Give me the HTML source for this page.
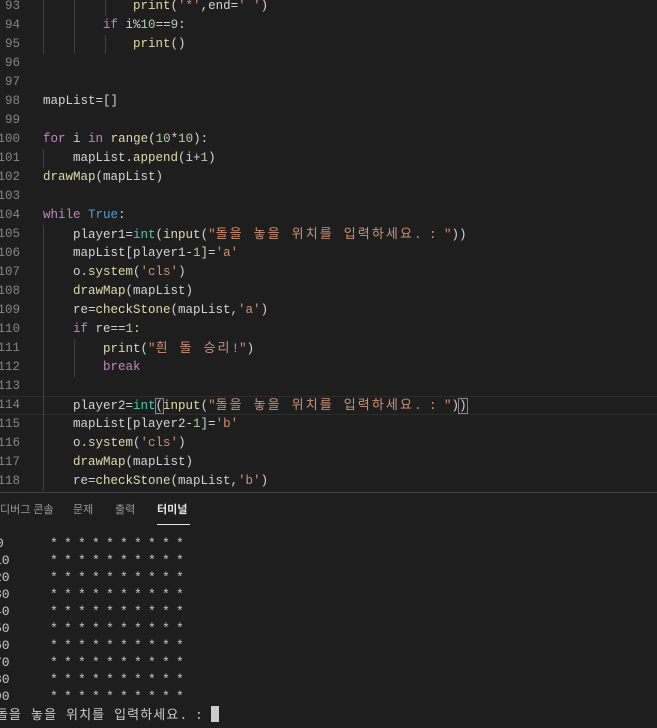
<!DOCTYPE html>
<html><head><meta charset="utf-8"><style>
body{margin:0;width:657px;height:728px;background:#1e1e1e;overflow:hidden;position:relative;font-family:"Liberation Mono","Noto Sans CJK KR",monospace;}
.ln{position:absolute;left:-31px;width:51px;text-align:right;color:#858585;font-size:12.5px;line-height:19px;}
.c{position:absolute;left:43px;color:#d4d4d4;font-size:12.5px;line-height:19px;white-space:pre;}
.k{color:#c586c0}.b{color:#4ec9b0}.f{color:#dcdcaa}.s{color:#ce9178}.n{color:#b5cea8}.t{color:#569cd6}
.kr{font-size:13px;letter-spacing:2.1px}
.g{position:absolute;width:1px;background:#404040}
.t2{position:absolute;color:#cccccc;font-size:13px;line-height:17px;white-space:pre;}
</style></head><body>
<div style="position:absolute;left:0;top:396px;width:657px;height:17px;border-top:1px solid #2c2c2c;border-bottom:1px solid #2c2c2c"></div>
<div class="g" style="left:43px;top:0;height:54px"></div>
<div class="g" style="left:74px;top:0;height:54px"></div>
<div class="g" style="left:105px;top:0;height:16px"></div>
<div class="g" style="left:105px;top:35px;height:19px"></div>
<div class="g" style="left:43px;top:149px;height:19px"></div>
<div class="g" style="left:43px;top:225px;height:266px"></div>
<div class="g" style="left:74px;top:339px;height:38px"></div>
<div id="code"></div>
<div style="position:absolute;left:0;top:492px;width:657px;height:1px;background:#444"></div>
<div style="position:absolute;top:502px;left:0;font-family:'Liberation Sans','Noto Sans CJK KR',sans-serif;font-size:11px;color:#999;line-height:16px">
<span style="position:absolute;left:0;white-space:nowrap">디버그 콘솔</span>
<span style="position:absolute;left:73px;white-space:nowrap">문제</span>
<span style="position:absolute;left:115px;white-space:nowrap">출력</span>
<span style="position:absolute;left:157px;white-space:nowrap;color:#e7e7e7;font-weight:bold">터미널</span>
</div>
<div style="position:absolute;left:157px;top:524px;width:33px;height:1px;background:#e7e7e7"></div>
<div id="term"></div>
<script>
const K='<span class="kr">돌을 놓을 위치를 입력하세요</span>';
const L=[
[93,'            <span class="f">print</span>(<span class="s">\'*\'</span>,end=<span class="s">\' \'</span>)'],
[94,'        <span class="k">if</span> i%<span class="n">10</span>==<span class="n">9</span>:'],
[95,'            <span class="f">print</span>()'],
[96,''],[97,''],
[98,'mapList=[]'],[99,''],
[100,'<span class="k">for</span> i <span class="k">in</span> <span class="f">range</span>(<span class="n">10</span>*<span class="n">10</span>):'],
[101,'    mapList.<span class="f">append</span>(i+<span class="n">1</span>)'],
[102,'<span class="f">drawMap</span>(mapList)'],[103,''],
[104,'<span class="k">while</span> <span class="t">True</span>:'],
[105,'    player1=<span class="b">int</span>(<span class="f">input</span>(<span class="s">"'+K+'. : "</span>))'],
[106,'    mapList[player1-<span class="n">1</span>]=<span class="s">\'a\'</span>'],
[107,'    o.<span class="f">system</span>(<span class="s">\'cls\'</span>)'],
[108,'    <span class="f">drawMap</span>(mapList)'],
[109,'    re=<span class="f">checkStone</span>(mapList,<span class="s">\'a\'</span>)'],
[110,'    <span class="k">if</span> re==<span class="n">1</span>:'],
[111,'        <span class="f">print</span>(<span class="s">"<span class="kr">흰 돌 승리</span>!"</span>)'],
[112,'        <span class="k">break</span>'],[113,''],
[114,'    player2=<span class="b">int</span><span style="outline:1px solid #888">(</span><span class="f">input</span>(<span class="s">"'+K+'. : "</span>)<span style="outline:1px solid #888">)</span>'],
[115,'    mapList[player2-<span class="n">1</span>]=<span class="s">\'b\'</span>'],
[116,'    o.<span class="f">system</span>(<span class="s">\'cls\'</span>)'],
[117,'    <span class="f">drawMap</span>(mapList)'],
[118,'    re=<span class="f">checkStone</span>(mapList,<span class="s">\'b\'</span>)']];
let h='';L.forEach((l,i)=>{const y=-3+i*19;h+=`<div class="ln" style="top:${y}px">${l[0]}</div><div class="c" style="top:${y}px">${l[1]}</div>`;});
document.getElementById('code').innerHTML=h;
let t='';const nums=['0','10','20','30','40','50','60','70','80','90'];
nums.forEach((n,i)=>{const y=535+i*17;t+=`<div class="t2" style="left:${n.length==1?-4:-6}px;top:${y}px">${n}</div><div class="t2" style="left:50px;top:${y}px;letter-spacing:6.2px">**********</div>`;});
t+=`<div class="t2" style="left:-4px;top:706px"><span style="font-size:13px;letter-spacing:1.1px">돌을 놓을 위치를 입력하세요</span>. : <span style="display:inline-block;width:8px;height:16px;background:#ccc;vertical-align:-3px"></span></div>`;
document.getElementById('term').innerHTML=t;
</script>
</body></html>
